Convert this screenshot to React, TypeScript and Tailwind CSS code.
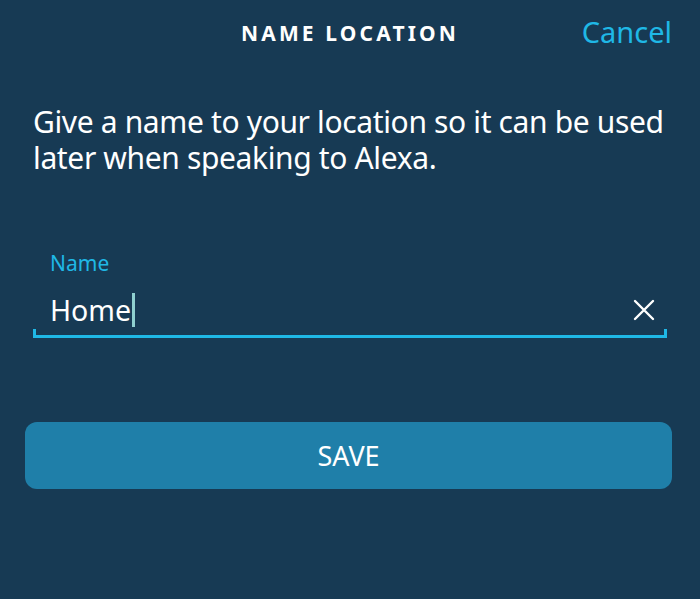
import React from 'react';

export default function App() {
  return (
    <div
      className="w-[700px] h-[599px] bg-[#173a54] text-white overflow-hidden"
      style={{ fontFamily: '"Noto Sans", "Open Sans", sans-serif' }}
    >
      <div className="relative h-[66px] flex items-center justify-center">
        <h1 className="text-[21px] font-bold tracking-[0.15em] leading-none">NAME LOCATION</h1>
        <button className="absolute right-[28px] top-[17px] text-[29px] leading-none text-[#1fb8e6]">Cancel</button>
      </div>

      <p className="mt-[38px] px-[33px] text-[30px] leading-[36px] tracking-[-0.012em]">
        Give a name to your location so it can be used later when speaking to Alexa.
      </p>

      <div className="mt-[77px] px-[33px]">
        <label className="block pl-[17px] text-[21px] leading-none text-[#1fb8e6]">Name</label>
        <div className="relative mt-[11px] h-[53px] border-b-[3px] border-[#1fb8e6]">
          <span className="absolute left-0 bottom-[-3px] h-[9px] w-[3px] bg-[#1fb8e6]" />
          <span className="absolute right-0 bottom-[-3px] h-[9px] w-[3px] bg-[#1fb8e6]" />
          <div className="flex items-center h-full pl-[17px] pr-[12px]">
            <span className="text-[28.5px] leading-none">Home</span>
            <span className="ml-[1px] h-[34px] w-[3px] bg-[#8fd0d0]" />
            <svg className="ml-auto" width="22" height="22" viewBox="0 0 22 22" fill="none" stroke="white" strokeWidth="2.4" strokeLinecap="round">
              <path d="M2 2 L20 20 M20 2 L2 20" />
            </svg>
          </div>
        </div>
      </div>

      <div className="mt-[84px] px-[25px] pr-[28px]">
        <button className="w-full h-[67px] rounded-[12px] bg-[#1f7fa9] text-[27px] leading-none">SAVE</button>
      </div>
    </div>
  );
}
